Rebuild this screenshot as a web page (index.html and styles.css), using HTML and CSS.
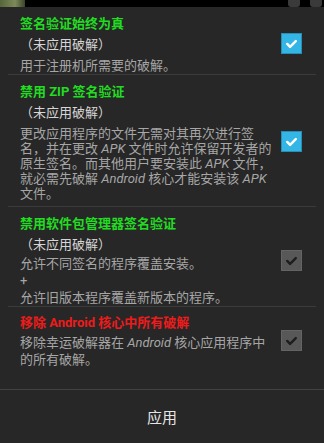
FILE: index.html
```html
<!DOCTYPE html>
<html lang="zh-CN">
<head>
    <meta charset="UTF-8">
    <meta name="viewport" content="width=device-width, initial-scale=1.0">
    <title>补丁选项</title>
    <link rel="stylesheet" href="styles.css">
</head>
<body>
    <div class="statusbar">
        <span class="app-icon"></span>
        <span class="status-icons"><i></i><i></i></span>
    </div>

    <div class="dialog">
        <div class="list">
            <div class="item item-first">
                <div class="text">
                    <div class="title">签名验证始终为真</div>
                    <div class="state">（未应用破解）</div>
                    <div class="desc">用于注册机所需要的破解。</div>
                </div>
                <span class="check"><svg viewBox="0 0 20 20"><path d="M5.5 10.5 L8.5 13.5 L14.5 7.5"/></svg></span>
            </div>

            <div class="item item-zip">
                <div class="text">
                    <div class="title">禁用 ZIP 签名验证</div>
                    <div class="state">（未应用破解）</div>
                    <div class="desc">更改应用程序的文件无需对其再次进行签<br>名，并在更改 <i>APK</i> 文件时允许保留开发者的<br>原生签名。而其他用户要安装此 <i>APK</i> 文件，<br>就必需先破解 <i>Android</i> 核心才能安装该 <i>APK</i><br>文件。</div>
                </div>
                <span class="check"><svg viewBox="0 0 20 20"><path d="M5.5 10.5 L8.5 13.5 L14.5 7.5"/></svg></span>
            </div>

            <div class="item item-pm">
                <div class="text">
                    <div class="title">禁用软件包管理器签名验证</div>
                    <div class="state">（未应用破解）</div>
                    <div class="desc desc-loose">允许不同签名的程序覆盖安装。<br>+<br>允许旧版本程序覆盖新版本的程序。</div>
                </div>
                <span class="check check-off"><svg viewBox="0 0 20 20"><path d="M5.5 10.5 L8.5 13.5 L14.5 7.5"/></svg></span>
            </div>

            <div class="item item-last">
                <div class="text">
                    <div class="title title-red">移除 Android 核心中所有破解</div>
                    <div class="desc desc-loose">移除幸运破解器在 <i>Android</i> 核心应用程序中<br>的所有破解。</div>
                </div>
                <span class="check check-off"><svg viewBox="0 0 20 20"><path d="M5.5 10.5 L8.5 13.5 L14.5 7.5"/></svg></span>
            </div>
        </div>

        <div class="footer">
            <button type="button">应用</button>
        </div>
    </div>
</body>
</html>
```

FILE: styles.css
```css
body {
    margin: 0;
    width: 324px;
    height: 443px;
    overflow: hidden;
    background-color: #272727;
    font-family: Roboto, "Noto Sans CJK SC", sans-serif;
    font-size: 13px;
}
.statusbar {
    height: 7px;
    background: #000;
    display: flex;
    justify-content: space-between;
}
.app-icon {
    width: 25px;
    background: linear-gradient(90deg, #55663a, #7d8a5a 60%, #3a4528);
}
.status-icons {
    display: flex;
    gap: 10px;
    padding-right: 2px;
}
.status-icons i {
    width: 12px;
    background: #3a3a3a;
    border-radius: 0 0 3px 3px;
}
.dialog {
    background-color: #272727;
    height: 436px;
    display: flex;
    flex-direction: column;
}
.list {
    flex: 1;
}
.item {
    display: flex;
    align-items: center;
    margin: 0 8px;
    padding: 7px 0 0 12px;
    border-bottom: 1px solid #3b3b3b;
}
.item-first {
    padding-bottom: 1px;
}
.item-zip {
    padding-bottom: 5px;
}
.item-pm {
    padding-bottom: 0;
}
.item-last {
    padding-top: 6px;
    padding-bottom: 21px;
    border-bottom: none;
}
.text {
    flex: 1;
    white-space: nowrap;
}
.title {
    color: #22dc22;
    font-weight: bold;
    line-height: 20px;
}
.title-red {
    color: #ee1b1b;
}
.state {
    color: #d6d6d6;
    line-height: 21px;
}
.desc {
    color: #a6a6a6;
    line-height: 15px;
    margin-top: 3px;
}
.desc-loose {
    line-height: 17px;
    margin-top: 0;
}
.item-last .desc {
    margin-top: 1px;
}
.desc i {
    font-style: italic;
}
.check {
    width: 19px;
    height: 19px;
    margin-right: 14px;
    background: #33b5e5;
    border: 1px solid #2a8db3;
    flex-shrink: 0;
}
.check svg {
    display: block;
    width: 19px;
    height: 19px;
    fill: none;
    stroke: #fff;
    stroke-width: 2.6;
    stroke-linecap: round;
    stroke-linejoin: round;
}
.check-off {
    background: #585858;
    border-color: #646464;
}
.check-off svg {
    stroke: #1e1e1e;
}
.footer {
    height: 53px;
    border-top: 1px solid #424242;
    display: flex;
}
.footer button {
    flex: 1;
    background: none;
    border: none;
    color: #e6e6e6;
    font-family: Roboto, "Noto Sans CJK SC", sans-serif;
    font-size: 15px;
    cursor: pointer;
    padding: 0;
}
```
